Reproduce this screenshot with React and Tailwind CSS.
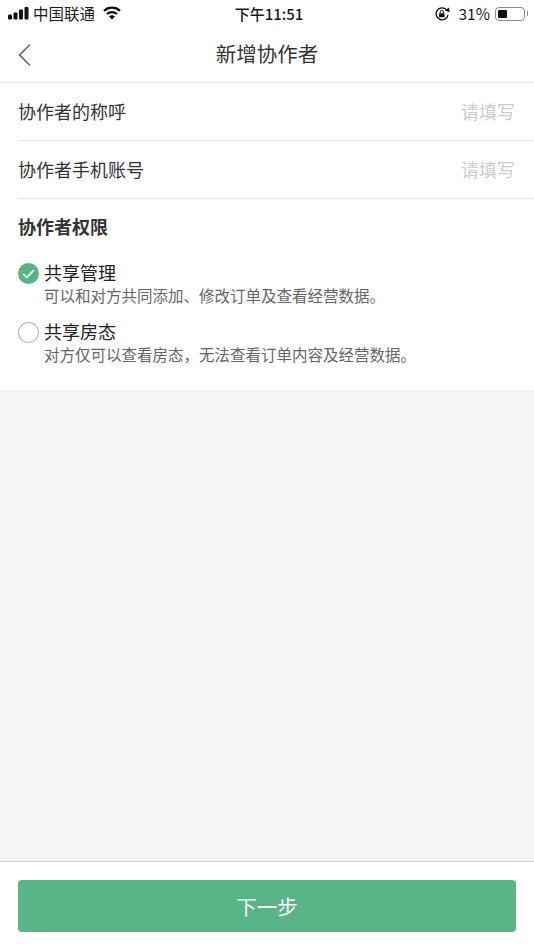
import React from 'react';

const FONT = "font-['Noto_Sans_CJK_SC','Liberation_Sans',sans-serif]";

function StatusBar() {
  return (
    <div className="h-[27px] flex items-center justify-between relative text-[#1a1a1a] bg-white pl-[8px] pr-[6px]">
      <div className="flex items-center">
        <svg width="21" height="13" viewBox="0 0 21 13" fill="#111">
          <rect x="0" y="7.5" width="4" height="5" rx="1.2" />
          <rect x="5.5" y="5.5" width="4" height="7" rx="1" />
          <rect x="11" y="2.5" width="4" height="10" rx="1" />
          <rect x="16.5" y="0" width="4" height="12.5" rx="1" />
        </svg>
        <span className="text-[15.5px] ml-[4px] leading-none">中国联通</span>
        <svg className="ml-[8px] mb-[1px]" width="18" height="14" viewBox="0 0 18 14" fill="none" stroke="#111" strokeWidth="2.3">
          <path d="M1 4.8 C5.5 0.6 12.5 0.6 17 4.8" />
          <path d="M4 8 C6.8 5.4 11.2 5.4 14 8" />
          <path d="M9 13.5 L6 10.4 C7.6 9 10.4 9 12 10.4 Z" fill="#111" stroke="none" />
        </svg>
      </div>
      {/* clock sits centered over the bar */}
      <span className="absolute left-[4px] right-0 text-center text-[15px] font-medium leading-none pointer-events-none">下午11:51</span>
      <div className="flex items-center">
        <svg width="16" height="16" viewBox="0 0 16 16" fill="none">
          <path d="M14 9 A6 6 0 1 1 12.4 3.6" stroke="#111" strokeWidth="1.3" />
          <path d="M10.8 4.6 L15.6 6.2 L15 1.6 Z" fill="#111" />
          <rect x="5" y="7.2" width="5.6" height="4" rx="0.5" fill="#111" />
          <path d="M6.2 7.2 V6 A1.6 1.6 0 0 1 9.4 6 V7.2" stroke="#111" strokeWidth="1" />
        </svg>
        <span className="text-[15.5px] ml-[9px] leading-none">31%</span>
        <div className="ml-[5px] w-[30px] h-[14px] border border-[#8a8a8a] rounded-[4px] p-[2px]">
          <div className="w-[9px] h-full bg-[#111] rounded-[1px]" />
        </div>
        <div className="w-[1.5px] h-[5px] bg-[#8a8a8a] ml-[1.5px]" />
      </div>
    </div>
  );
}

function NavBar() {
  return (
    <div className="h-[56px] relative flex items-center justify-center border-b border-[#e6e6e6] bg-white">
      <button className="absolute left-[18px] top-[16px]">
        <svg width="13" height="24" viewBox="0 0 13 24" fill="none" stroke="#666" strokeWidth="1.6">
          <path d="M12 1.5 L1.6 12 L12 22.5" />
        </svg>
      </button>
      <span className="text-[20.5px] text-[#333] leading-none mb-[3px]">新增协作者</span>
    </div>
  );
}

function FieldRow({ label }) {
  return (
    <div className="h-[58px] ml-[18px] flex items-center justify-between pr-[19px] pb-[1px] border-b border-[#e6e6e6]">
      <span className="text-[18px] text-[#333] leading-none">{label}</span>
      <span className="text-[18px] text-[#cccccc] leading-none">请填写</span>
    </div>
  );
}

function PermissionOption({ checked, title, desc }) {
  return (
    <div className="flex items-start">
      {checked ? (
        <div className="w-[21px] h-[21px] rounded-full bg-[#57b587] flex items-center justify-center mt-[3px]">
          <svg width="13" height="10" viewBox="0 0 13 10" fill="none" stroke="#fff" strokeWidth="1.7">
            <path d="M1.2 5 L4.8 8.4 L11.8 1.2" />
          </svg>
        </div>
      ) : (
        <div className="w-[21px] h-[21px] rounded-full border-[1.5px] border-[#a6a6a6] mt-[3px]" />
      )}
      <div className="ml-[5px]">
        <div className="text-[18px] text-[#222] leading-[26px] -mt-[1px]">{title}</div>
        <div className="text-[15.5px] text-[#666] leading-[20px]">{desc}</div>
      </div>
    </div>
  );
}

export default function App() {
  return (
    <div className={`${FONT} w-[534px] h-[950px] flex flex-col bg-[#f5f5f5] overflow-hidden`}>
      <StatusBar />
      <NavBar />
      <div className="bg-white h-[307px]">
        <FieldRow label="协作者的称呼" />
        <FieldRow label="协作者手机账号" />
        <div className="px-[18px]">
          <div className="text-[18px] font-bold text-[#333] leading-none mt-[18px]">协作者权限</div>
          <div className="mt-[25px] flex flex-col gap-[14px]">
            <PermissionOption checked title="共享管理" desc="可以和对方共同添加、修改订单及查看经营数据。" />
            <PermissionOption title="共享房态" desc="对方仅可以查看房态，无法查看订单内容及经营数据。" />
          </div>
        </div>
      </div>
      <div className="flex-1" />
      <div className="h-[89px] bg-white border-t border-[#cfcfcf] px-[18px] pt-[18px]">
        <button className="w-full h-[52px] rounded-[4px] bg-[#57b587] text-white text-[20.5px]">下一步</button>
      </div>
    </div>
  );
}
